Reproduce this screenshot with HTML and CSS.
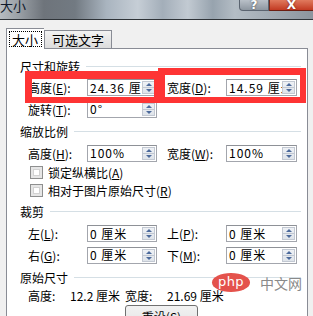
FILE: index.html
```html
<!DOCTYPE html>
<html lang="zh-CN">
<head>
    <meta charset="UTF-8">
    <title>大小</title>
    <link rel="stylesheet" href="styles.css">
</head>
<body>

<div class="titlebar">
    <span class="title">大小</span>
    <div class="caption-btns">
        <span class="btn-help">?</span>
        <span class="btn-close">X</span>
    </div>
</div>

<div class="dialog">
    <div class="tabs">
        <div class="tab active"><span class="focus">大小</span></div>
        <div class="tab">可选文字</div>
    </div>

    <div class="panel">
        <div class="group g1"><span>尺寸和旋转</span></div>
        <div class="row r-e">
            <div class="cell">
                <label>高度(<u>E</u>):</label>
                <div class="spin"><span class="val">24.36 厘米</span><i class="arrows"></i></div>
            </div>
            <div class="cell">
                <label>宽度(<u>D</u>):</label>
                <div class="spin wide"><span class="val">14.59 厘米</span><i class="arrows"></i></div>
            </div>
        </div>
        <div class="row r-rot">
            <div class="cell">
                <label>旋转(<u>T</u>):</label>
                <div class="spin"><span class="val">0°</span><i class="arrows"></i></div>
            </div>
        </div>

        <div class="group g2"><span>缩放比例</span></div>
        <div class="row r-h">
            <div class="cell">
                <label>高度(<u>H</u>):</label>
                <div class="spin"><span class="val">100%</span><i class="arrows"></i></div>
            </div>
            <div class="cell">
                <label>宽度(<u>W</u>):</label>
                <div class="spin wide"><span class="val">100%</span><i class="arrows"></i></div>
            </div>
        </div>
        <div class="check c1"><i class="box"></i>锁定纵横比(<u>A</u>)</div>
        <div class="check c2"><i class="box"></i>相对于图片原始尺寸(<u>R</u>)</div>

        <div class="group g3"><span>裁剪</span></div>
        <div class="row r-l">
            <div class="cell">
                <label>左(<u>L</u>):</label>
                <div class="spin"><span class="val">0 厘米</span><i class="arrows"></i></div>
            </div>
            <div class="cell">
                <label>上(<u>P</u>):</label>
                <div class="spin wide"><span class="val">0 厘米</span><i class="arrows"></i></div>
            </div>
        </div>
        <div class="row r-g">
            <div class="cell">
                <label>右(<u>G</u>):</label>
                <div class="spin"><span class="val">0 厘米</span><i class="arrows"></i></div>
            </div>
            <div class="cell">
                <label>下(<u>M</u>):</label>
                <div class="spin wide"><span class="val">0 厘米</span><i class="arrows"></i></div>
            </div>
        </div>

        <div class="group g4"><span>原始尺寸</span></div>
        <div class="orig">
            <span class="k">高度:</span><span class="v">12.2 厘米</span><span class="k">宽度:</span><span>21.69 厘米</span>
        </div>
        <div class="btn-row"><button class="reset">重设(<u>S</u>)</button></div>
    </div>
</div>

<!-- annotation boxes + watermark sit on top of the dialog -->
<div class="mark mark1"></div>
<div class="mark mark2"></div>
<div class="watermark"><span class="php">php</span><span class="cn">中文网</span></div>

</body>
</html>
```

FILE: styles.css
```css
body {
    margin: 0;
    width: 313px;
    height: 316px;
    overflow: hidden;
    position: relative;
    font-family: "Noto Sans CJK SC", "Noto Sans", sans-serif;
    font-size: 12px;
    color: #000;
    background: #f0f0f0;
}
u {
    text-decoration: underline;
    text-underline-offset: 1px;
}

/* title bar */
.titlebar {
    height: 19px;
    border-bottom: 1px solid #2e3338;
    display: flex;
    justify-content: space-between;
    overflow: hidden;
    background: linear-gradient(90deg, #b7bcc1 0%, #9aa0a6 6%, #6e747b 14%, #727a82 24%, #a9b4bf 34%, #c6ced6 44%, #a3aeb9 52%, #c2cad2 60%, #97a3ae 68%, #b4bdc5 75%, #8c959e 100%);
}
.title {
    font-size: 13px;
    line-height: 13px;
    margin-top: -1px;
    color: #101a2c;
}
.caption-btns {
    display: flex;
    align-items: flex-start;
}
.btn-help,
.btn-close {
    height: 10px;
    line-height: 10px;
    text-align: center;
    font-family: "DejaVu Sans", sans-serif;
    font-weight: bold;
    color: #fff;
    overflow: hidden;
}
.btn-help {
    width: 28px;
    border: 1px solid #5b6470;
    border-top: none;
    border-radius: 0 0 0 4px;
    background: linear-gradient(#b9c0c8, #8d96a0);
    font-size: 12px;
    text-shadow: 0 0 2px #333;
}
.btn-close {
    width: 43px;
    border-bottom: 1px solid #6b1e12;
    border-left: 1px solid #7a2a1c;
    background: linear-gradient(#e07a5e, #c23a22);
    font-size: 12px;
    text-shadow: 0 0 2px #5a1208;
}

/* tabs + panel */
.dialog {
    padding: 7px 5px 0 6px;
}
.tabs {
    display: flex;
    align-items: flex-end;
    height: 21px;
}
.tab {
    height: 18px;
    line-height: 17px;
    padding: 0 7px;
    border: 1px solid #898c95;
    border-bottom: none;
    background: linear-gradient(#f2f2f2, #dcdcdc);
    box-sizing: border-box;
    font-size: 13px;
}
.tab.active {
    height: 21px;
    padding: 2px 2px 0 2px;
    background: #fff;
    border-right: none;
    margin-bottom: -1px;
    position: relative;
    z-index: 1;
}
.focus {
    display: block;
    width: 33px;
    height: 16px;
    line-height: 15px;
    padding-left: 2px;
    box-sizing: border-box;
    border: 1px dotted #000;
}
.panel {
    height: 268px;
    overflow: hidden;
    border: 1px solid #898c95;
    border-bottom: none;
    background: #fff;
    padding-top: 7px;
    box-sizing: border-box;
}

.group {
    display: flex;
    align-items: center;
    padding: 0 6px 0 13px;
    height: 21px;
    font-size: 12px;
}
.group::after {
    content: "";
    flex: 1;
    height: 1px;
    margin-left: 6px;
    background: #d5dfe5;
}
.g2 { height: 23px; }
.g3 { height: 23px; }
.g4 { height: 23px; }

.row {
    display: flex;
    align-items: center;
    padding-left: 21px;
    height: 21px;
}
.r-rot { height: 22px; }
.r-h { height: 20px; }
.r-g { height: 22px; }
.cell {
    display: flex;
    align-items: center;
    width: 139px;
}
.cell label {
    width: 59px;
    white-space: nowrap;
}
.spin {
    width: 70px;
    height: 17px;
    border: 1px solid #a3a6ad;
    border-top-color: #8e9197;
    box-sizing: border-box;
    display: flex;
    align-items: center;
    background: #fff;
}
.spin.wide {
    width: 71px;
}
.val {
    flex: 1;
    overflow: hidden;
    white-space: nowrap;
    padding-left: 2px;
    line-height: 14px;
    letter-spacing: 1px;
}
.arrows {
    width: 13px;
    height: 13px;
    margin-right: 1px;
    border: 1px solid #c2c8d2;
    box-sizing: border-box;
    background:
        linear-gradient(#c2c8d2, #c2c8d2) 0 5px / 100% 1px no-repeat,
        linear-gradient(#eef1f5, #dfe4ea);
    position: relative;
}
.arrows::before,
.arrows::after {
    content: "";
    position: absolute;
    left: 3px;
    border-left: 3px solid transparent;
    border-right: 3px solid transparent;
}
.arrows::before {
    top: 1px;
    border-bottom: 3px solid #4c6a9c;
}
.arrows::after {
    bottom: 1px;
    border-top: 3px solid #4c6a9c;
}

.check {
    display: flex;
    align-items: center;
    padding-left: 23px;
    height: 18px;
}
.c2 { height: 19px; }
.box {
    width: 13px;
    height: 13px;
    margin-right: 5px;
    border: 1px solid #8e8f8f;
    box-sizing: border-box;
    background: #fff;
    box-shadow: inset 0 0 0 2px #e6e6e6, inset 0 0 0 3px #d2d2d2;
}

.orig {
    height: 14px;
    line-height: 14px;
    padding-left: 21px;
    white-space: nowrap;
}
.orig .k {
    display: inline-block;
    width: 42px;
}
.orig .v {
    display: inline-block;
    width: 55px;
}
.btn-row {
    padding: 2px 0 0 118px;
}
.reset {
    width: 73px;
    height: 22px;
    border: 1px solid #707070;
    border-radius: 3px;
    background: linear-gradient(#f2f2f2 0%, #ebebeb 50%, #dddddd 51%, #cfcfcf 100%);
    font-family: inherit;
    font-size: 12px;
    padding: 0;
}

/* overlays */
.mark {
    position: absolute;
    border: solid #fe3434;
    box-sizing: border-box;
}
.mark1 {
    left: 25px;
    top: 71px;
    width: 136px;
    height: 32px;
    border-width: 8px 7px 6px 7px;
}
.mark2 {
    left: 158px;
    top: 68px;
    width: 148px;
    height: 35px;
    border-width: 7px 6px 6px 7px;
}
.watermark {
    position: absolute;
    left: 212px;
    top: 273px;
    display: flex;
    align-items: center;
}
.php {
    width: 38px;
    height: 19px;
    border-radius: 50%;
    background: #e4524c;
    color: #fff;
    font-family: "DejaVu Sans", sans-serif;
    font-size: 13px;
    line-height: 18px;
    text-align: center;
    letter-spacing: 0.5px;
}
.cn {
    margin-left: 10px;
    font-size: 14px;
    line-height: 18px;
    color: #8a8a8a;
    letter-spacing: 0;
}
```
